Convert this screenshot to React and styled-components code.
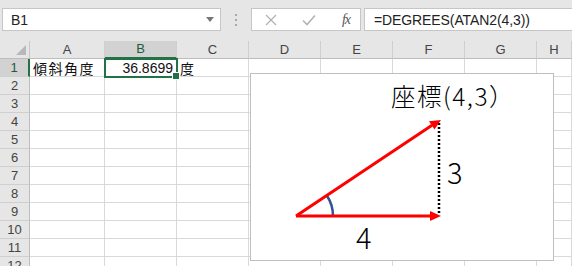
import React from "react";
import styled, { createGlobalStyle } from "styled-components";

const GlobalStyle = createGlobalStyle`
  html, body { margin: 0; padding: 0; background: #ffffff; }
  body { font-family: "Liberation Sans", "Noto Sans CJK JP", sans-serif; }
  * { box-sizing: border-box; }
`;

const Page = styled.div`
  position: relative;
  width: 572px;
  height: 266px;
  overflow: hidden;
  background: #ffffff;
`;

const FormulaBar = styled.div`
  display: flex;
  align-items: flex-start;
  height: 41px;
  padding: 8px 0 0 2px;
  background: #e6e6e6;
`;

const Box = styled.div`
  height: 23px;
  background: #ffffff;
  border: 1px solid #c6c6c6;
  display: flex;
  align-items: center;
`;

const NameBox = styled(Box)`
  width: 219px;
  padding: 0 6px 0 8px;
  justify-content: space-between;
  font-size: 14px;
  color: #222;
`;

const DropArrow = styled.span`
  width: 0;
  height: 0;
  border-left: 4px solid transparent;
  border-right: 4px solid transparent;
  border-top: 5px solid #777;
`;

const Grip = styled.div`
  width: 30px;
  height: 23px;
  display: flex;
  flex-direction: column;
  align-items: center;
  justify-content: center;
  gap: 3px;
  & span {
    width: 2px;
    height: 2px;
    background: #a8a8a8;
  }
`;

const ButtonsBox = styled(Box)`
  width: 110px;
  padding: 0 10px 0 13px;
  justify-content: space-between;
`;

const FxLabel = styled.span`
  font-family: "Liberation Serif", serif;
  font-style: italic;
  font-size: 14px;
  color: #555;
  letter-spacing: -1px;
`;

const FormulaBox = styled(Box)`
  flex: 1;
  margin-left: 3px;
  padding-left: 9px;
  border-right: none;
  font-size: 14px;
  color: #222;
  letter-spacing: -0.1px;
`;

const Sheet = styled.div`
  display: grid;
  grid-template-columns: 30px 75px 72px 72px 72px 72px 72px 72px 1fr;
  grid-auto-rows: 18px;
`;

const Corner = styled.div`
  position: relative;
  background: #e6e6e6;
  border-right: 1px solid #c8c8c8;
  border-bottom: 1px solid #bdbdbd;
  &::after {
    content: "";
    position: absolute;
    right: 3px;
    bottom: 3px;
    width: 0;
    height: 0;
    border-left: 10px solid transparent;
    border-bottom: 10px solid #b8b8b8;
  }
`;

const ColHead = styled.div`
  background: ${(p) => (p.$active ? "#d2d2d2" : "#e6e6e6")};
  border-right: 1px solid #cfcfcf;
  border-bottom: ${(p) => (p.$active ? "2px solid #217346" : "1px solid #bdbdbd")};
  color: ${(p) => (p.$active ? "#1f5c3a" : "#444")};
  font-size: 13px;
  display: flex;
  align-items: flex-end;
  justify-content: center;
  padding-bottom: 1px;
`;

const RowHead = styled.div`
  background: ${(p) => (p.$active ? "#d2d2d2" : "#e6e6e6")};
  border-right: ${(p) => (p.$active ? "2px solid #217346" : "1px solid #bdbdbd")};
  border-bottom: 1px solid #cfcfcf;
  color: ${(p) => (p.$active ? "#1f5c3a" : "#444")};
  font-size: 13px;
  display: flex;
  align-items: center;
  justify-content: center;
`;

const Cell = styled.div`
  position: relative;
  border-right: 1px solid #d9d9d9;
  border-bottom: 1px solid #d9d9d9;
  font-size: 14px;
  color: #111;
  display: flex;
  align-items: center;
  padding: 0 3px;
  white-space: nowrap;
  justify-content: ${(p) => (p.$num ? "flex-end" : "flex-start")};
  font-family: ${(p) =>
    p.$cjk ? '"Noto Sans CJK JP", sans-serif' : '"Liberation Sans", sans-serif'};
  letter-spacing: ${(p) => (p.$cjk ? "1.5px" : "0")};
  ${(p) =>
    p.$selected &&
    `
    outline: 2px solid #217346;
    outline-offset: -1px;
    z-index: 2;
    &::after {
      content: "";
      position: absolute;
      right: -4px;
      bottom: -4px;
      width: 6px;
      height: 6px;
      background: #217346;
      border: 1px solid #ffffff;
    }
  `}
`;

const Chart = styled.div`
  position: absolute;
  left: 250px;
  top: 73px;
  width: 304px;
  height: 188px;
  background: #ffffff;
  border: 1px solid #bfbfbf;
  z-index: 3;
`;

const ChartSvg = styled.svg`
  display: block;
  width: 302px;
  height: 186px;
  font-family: "Noto Sans CJK JP", sans-serif;
  font-weight: 300;
`;

const cols = ["A", "B", "C", "D", "E", "F", "G", "H"];

const cellContent = {
  "1-A": { text: "傾斜角度", cjk: true },
  "1-B": { text: "36.8699", num: true, selected: true },
  "1-C": { text: "度", cjk: true },
};

export default function App() {
  const rows = Array.from({ length: 12 }, (_, i) => i + 1);
  return (
    <Page>
      <GlobalStyle />
      <FormulaBar>
        <NameBox>
          <span>B1</span>
          <DropArrow />
        </NameBox>
        <Grip>
          <span />
          <span />
          <span />
        </Grip>
        <ButtonsBox>
          <svg width="12" height="12" viewBox="0 0 12 12">
            <path d="M1 1 L11 11 M11 1 L1 11" stroke="#b3b3b3" strokeWidth="1.3" fill="none" />
          </svg>
          <svg width="14" height="12" viewBox="0 0 14 12">
            <path d="M1 6.5 L5 10.5 L13 1.5" stroke="#b3b3b3" strokeWidth="1.6" fill="none" />
          </svg>
          <FxLabel>fx</FxLabel>
        </ButtonsBox>
        <FormulaBox>=DEGREES(ATAN2(4,3))</FormulaBox>
      </FormulaBar>
      <Sheet>
        <Corner />
        {cols.map((c) => (
          <ColHead key={c} $active={c === "B"}>
            {c}
          </ColHead>
        ))}
        {rows.map((r) => (
          <React.Fragment key={r}>
            <RowHead $active={r === 1}>{r}</RowHead>
            {cols.map((c) => {
              const info = cellContent[`${r}-${c}`] || {};
              return (
                <Cell
                  key={c}
                  $cjk={info.cjk}
                  $num={info.num}
                  $selected={info.selected}
                >
                  {info.text}
                </Cell>
              );
            })}
          </React.Fragment>
        ))}
      </Sheet>
      <Chart>
        <ChartSvg viewBox="0 0 302 186">
          <line x1="188" y1="49" x2="188" y2="141" stroke="#000" strokeWidth="2.5" strokeDasharray="2 2" />
          <path d="M82 142 A37 37 0 0 0 75.8 121.5" stroke="#2f5597" strokeWidth="2.5" fill="none" />
          <line x1="45" y1="142" x2="180" y2="142" stroke="#ff0000" strokeWidth="3" />
          <polygon points="190,142 179,137 179,147" fill="#ff0000" />
          <line x1="45" y1="142" x2="181" y2="51.3" stroke="#ff0000" strokeWidth="3" />
          <polygon points="190,46 183.5,55.5 178,47.3" fill="#ff0000" />
          <text x="140" y="32" fontSize="24.5" letterSpacing="1.5" fill="#000">座標(4,3）</text>
          <text x="196" y="110" fontSize="29" fill="#000">3</text>
          <text x="105" y="175" fontSize="29" fill="#000">4</text>
        </ChartSvg>
      </Chart>
    </Page>
  );
}
